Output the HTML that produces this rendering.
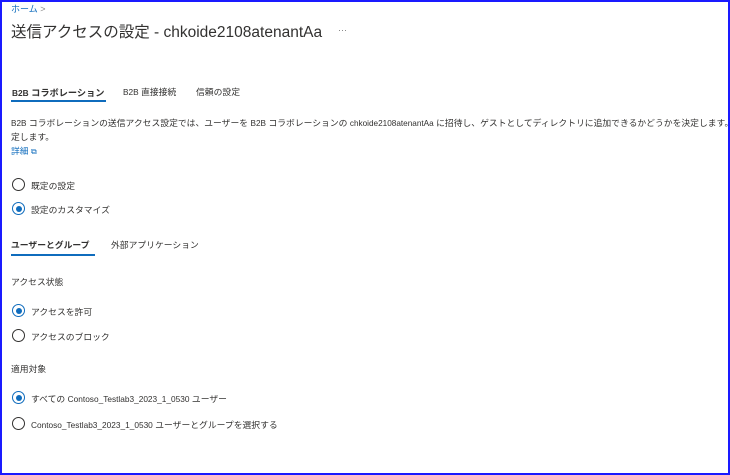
<!DOCTYPE html>
<html><head><meta charset="utf-8"><style>
body{margin:0;width:730px;height:475px;overflow:hidden;background:#fff;font-family:"Liberation Sans","Noto Sans CJK JP",sans-serif;color:#323130;}
.frame{position:absolute;left:0;top:0;width:726px;height:471px;border:2px solid #1a1aff;}
.a{position:absolute;white-space:nowrap;}
.s{font-size:8.8px;}
.l{font-size:8.3px;}
.r{position:absolute;width:11px;height:11px;border:1px solid #323130;border-radius:50%;}
.r.on{border-color:#0f6cbd;}
.r.on::after{content:"";position:absolute;left:2.5px;top:2.5px;width:6px;height:6px;border-radius:50%;background:#0f6cbd;}
.u{position:absolute;height:2px;background:#0f6cbd;}
</style></head><body>
<div class="frame"></div>
<div class="a" style="left:11px;top:2px;font-size:9px;color:#0f6cbd">ホーム <span style="color:#888">&gt;</span></div>
<div class="a" style="left:11px;top:20px;font-size:15.5px;color:#323130">送信アクセスの設定 - chkoide2108atenantAa</div>
<div class="a" style="left:338px;top:25px;font-size:9px;color:#777">···</div>
<div class="a s" style="left:12px;top:85px;color:#323130;font-weight:bold;font-size:9.2px"><span class="l">B2B</span> コラボレーション</div>
<div class="u" style="left:11px;top:100px;width:95px"></div>
<div class="a s" style="left:123px;top:85px"><span class="l">B2B</span> 直接接続</div>
<div class="a s" style="left:196px;top:85px">信頼の設定</div>
<div class="a" style="left:11px;top:116px;font-size:8.8px"><span style="font-size:8.2px">B2B</span> コラボレーションの送信アクセス設定では、ユーザーを <span style="font-size:8.2px">B2B</span> コラボレーションの <span style="font-size:8.2px">chkoide2108atenantAa</span> に招待し、ゲストとしてディレクトリに追加できるかどうかを決定します。</div>
<div class="a" style="left:11px;top:130px;font-size:8.8px">定します。</div>
<div class="a" style="left:11px;top:144px;font-size:8.8px;color:#0f6cbd">詳細 <span style="font-size:8px">⧉</span></div>
<div class="r" style="left:12px;top:178px"></div><div class="a s" style="left:31px;top:179px">既定の設定</div>
<div class="r on" style="left:12px;top:202px"></div><div class="a s" style="left:31px;top:203px">設定のカスタマイズ</div>
<div class="a s" style="left:11px;top:238px;font-weight:bold">ユーザーとグループ</div>
<div class="u" style="left:11px;top:254px;width:84px"></div>
<div class="a s" style="left:111px;top:238px">外部アプリケーション</div>
<div class="a s" style="left:11px;top:275px">アクセス状態</div>
<div class="r on" style="left:12px;top:304px"></div><div class="a s" style="left:31px;top:305px">アクセスを許可</div>
<div class="r" style="left:12px;top:329px"></div><div class="a s" style="left:31px;top:330px">アクセスのブロック</div>
<div class="a s" style="left:11px;top:362px">適用対象</div>
<div class="r on" style="left:12px;top:391px"></div><div class="a s" style="left:31px;top:392px">すべての <span class="l">Contoso_Testlab3_2023_1_0530</span> ユーザー</div>
<div class="r" style="left:12px;top:417px"></div><div class="a s" style="left:31px;top:418px"><span class="l">Contoso_Testlab3_2023_1_0530</span> ユーザーとグループを選択する</div>
</body></html>
